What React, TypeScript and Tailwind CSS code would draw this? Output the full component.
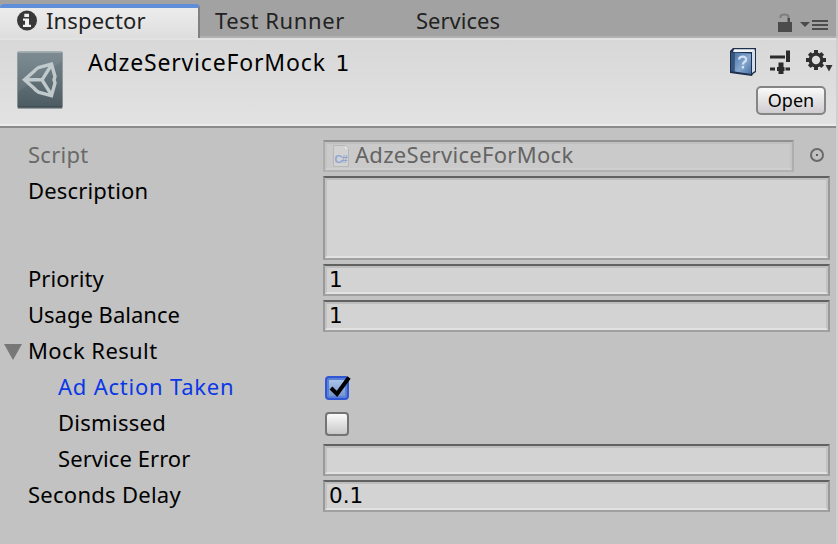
import React from 'react';

const sans = "font-['Noto_Sans','DejaVu_Sans',sans-serif]";
const digits = "font-['DejaVu_Sans',sans-serif]";

function Frame({ className = '', faded = false, children }: { className?: string; faded?: boolean; children?: React.ReactNode }) {
  return (
    <div className={`border-2 ${faded ? 'border-x-[#adadad] border-t-[#919191] border-b-[#b1b1b1]' : 'border-x-[#999999] border-t-[#616161] border-b-[#a0a0a0]'} ${className}`}>
      <div className={`flex h-full items-center border-2 ${faded ? 'border-x-[#c3c3c3] border-t-[#c0c0c0] border-b-[#d0d0d0] bg-[#cacaca]' : 'border-x-[#c3c3c3] border-t-[#bebebe] border-b-[#e2e2e2] bg-[#d3d3d3]'}`}>
        {children}
      </div>
    </div>
  );
}

function Row({ label, className = '', tall = false, children }: { label: string; className?: string; tall?: boolean; children?: React.ReactNode }) {
  return (
    <div className={`flex ${tall ? 'h-[84px]' : 'h-8'}`}>
      <div className={`h-7 w-[295px] shrink-0 whitespace-nowrap text-[22px] leading-7 ${className}`}>{label}</div>
      {children}
    </div>
  );
}

function Value({ children }: { children: string }) {
  return <span className={`${digits} pl-[2px] text-[21.5px] leading-7 text-black`}>{children}</span>;
}

function InfoIcon() {
  return (
    <svg className="block" width="22" height="22" viewBox="0 0 22 22">
      <circle cx="11" cy="10.500" r="10" fill="#393939" />
      <path d="M8.300 3.800H13V7H8.300zM7 8.500h6v6.200h2v2.300H7v-2.300h2v-4H7z" fill="#f2f2f2" />
    </svg>
  );
}

function AssetIcon() {
  return (
    <svg className="block" width="46" height="58" viewBox="0 0 46 58">
      <defs>
        <linearGradient id="asset" x1="0" y1="0" x2="0" y2="1">
          <stop offset="0" stopColor="#76858c" />
          <stop offset=".5" stopColor="#637279" />
          <stop offset="1" stopColor="#4c5a62" />
        </linearGradient>
      </defs>
      <rect x="0.500" y="1" width="45" height="57" rx="1" fill="#9a9fa1" />
      <rect x="0.500" y="0.500" width="45" height="56" rx="1" fill="url(#asset)" />
      <path d="M1 1h44v9L1 41z" fill="#fff" opacity=".06" />
      <path d="M1 1.500h44" stroke="#9aa8ad" />
      <path d="M1 56h44" stroke="#36454d" />
      <g fill="none" stroke="#c0c9cc" strokeWidth="3.400" strokeLinejoin="miter">
        <path d="M18.500 19 7.500 28.800l11 9.800M7 28.800h18M25 28.800l9.500-15M25 28.800l9.500 15M17.500 19.500l4-3 13-3.500 3.500 12.500-1 3.300 1 3.300-3.500 12.500-13-3.500-4-3" />
      </g>
    </svg>
  );
}

function LockIcon() {
  return (
    <svg className="block" width="16" height="20" viewBox="0 0 16 20">
      <path d="M4.500 5V3.500Q5 1.500 8.500 1.500T12.500 3.500V6" fill="none" stroke="#7d7d7d" strokeWidth="2" />
      <path d="M2 9h14v10H2z" fill="#4b4b4b" />
      <path d="M11.500 5h2.500v4h-2.500z" fill="#4b4b4b" />
    </svg>
  );
}

function MenuIcon() {
  return (
    <svg className="block" width="28" height="12" viewBox="0 0 28 12">
      <path d="M0 3h10L5 8z" fill="#4b4b4b" />
      <path d="M12 2h16M12 6h16M12 10h16" stroke="#4b4b4b" strokeWidth="2" />
    </svg>
  );
}

function BookIcon() {
  return (
    <svg className="block" width="28" height="30" viewBox="0 0 28 30">
      <defs>
        <linearGradient id="book" x1="0" y1="0" x2="1" y2="1">
          <stop offset="0" stopColor="#4f77a6" />
          <stop offset=".55" stopColor="#85a8d0" />
          <stop offset="1" stopColor="#4a70a2" />
        </linearGradient>
      </defs>
      <path d="M0 3 3 0h23v24l-3 2-1 2L0 25z" fill="#1d304e" />
      <path d="M4 1.200h20.500l.500 2.800H3z" fill="#f3f6f9" />
      <path d="M22 3h3v20l-3 2z" fill="#d5dde6" />
      <path d="M1 4 4 5v19l-3-1z" fill="#345780" />
      <path d="m4.500 4.500 16.500 1v20.500L4.500 23.500z" fill="url(#book)" />
      <path d="M9 11.500q.500-3 4-2.800 3.500.300 3 3.300-.300 1.500-2 2.300-1 .800-1 2.200M13 18v2.500" fill="none" stroke="#d5e2f2" strokeWidth="2.200" />
    </svg>
  );
}

function SlidersIcon() {
  return (
    <svg className="block" width="20" height="24" viewBox="0 0 20 24">
      <path d="M0 7h15M0 19h5M15.500 19H20" stroke="#2b2b2b" strokeWidth="3" />
      <path d="M16 .500h4v11.500h-4z" fill="#2b2b2b" />
      <path d="M8.500 12.500h5v11.500h-5z" fill="#2b2b2b" />
      <path d="M7 19h7.500" stroke="#2b2b2b" strokeWidth="4" />
    </svg>
  );
}

function GearIcon() {
  return (
    <svg className="block" width="28" height="24" viewBox="0 0 28 24">
      <g stroke="#2f2f2f" strokeWidth="4">
        <path d="M10 0v20M0 10h20M3.300 3.300l13.400 13.400M16.700 3.300 3.300 16.700" />
      </g>
      <circle cx="10" cy="10" r="7.500" fill="#2f2f2f" />
      <circle cx="10" cy="10" r="4.200" fill="#dcdcdc" />
      <path d="M19.500 15h7L23 21.500z" fill="#333" />
    </svg>
  );
}

function ScriptIcon() {
  return (
    <svg className="block" width="16" height="22" viewBox="0 0 16 22">
      <path d="M.500.500h12l3 3v18H.500z" fill="#d2d2d2" stroke="#b8b8b8" />
      <path d="M12 .500v3.500h3.500z" fill="#e2e2e2" />
      <text x="1.600" y="17.500" fontSize="11" textLength="13" fontFamily="Liberation Sans, sans-serif" fontWeight="bold" fill="#91a5d2">C#</text>
    </svg>
  );
}

export default function App() {
  return (
    <div className={`${sans} flex h-[544px] w-[838px] overflow-hidden bg-[#c2c2c2] text-black`}>
      <div className="flex w-[836px] flex-col">
        <div className="flex h-[38px] border-b-2 border-[#b0b0b0] bg-[#a2a2a2] pt-1 text-[22px] leading-[33px] text-[#222]">
          <div className="flex h-[34px] w-[200px] rounded-t border-t-4 border-r-2 border-t-[#5f8fd9] border-r-[#818181] bg-linear-to-b from-[#ececec] to-[#dedede] pl-4">
            <div className="pt-[2px]"><InfoIcon /></div>
            <div className="-mt-1 pl-[8px] tracking-[0.150px]">Inspector</div>
          </div>
          <div className="w-[200px] pl-[15px] tracking-[0.600px]">Test Runner</div>
          <div className="pl-[16px] tracking-[0px]">Services</div>
          <div className="ml-auto flex pt-[9px] pr-2">
            <LockIcon />
            <div className="pt-[6px] pl-[8px]"><MenuIcon /></div>
          </div>
        </div>

        <div className="flex h-[90px] border-t-2 border-b-2 border-t-[#e2e2e2] border-b-[#8b8b8b] bg-linear-to-b from-[#d8d8d8] to-[#e2e2e2] shadow-[inset_0_-2px_0_#ebebeb]">
          <div className="pt-[11px] pl-[17px]"><AssetIcon /></div>
          <div className="pt-[7px] pl-[25px] text-[23px] leading-[31px] tracking-[0.830px]">AdzeServiceForMock <span className={`${digits} pl-[3px] text-[22px]`}>1</span></div>
          <div className="ml-auto flex flex-col items-end">
            <div className="flex pt-2 pr-[2px]">
              <BookIcon />
              <div className="pt-[2px] pl-[12px]"><SlidersIcon /></div>
              <div className="pt-[2px] pl-[16px]"><GearIcon /></div>
            </div>
            <div className="mt-[8px] mr-[10px] flex h-[29px] w-[70px] items-center justify-center rounded-[5px] border-2 border-[#858585] bg-linear-to-b from-[#fafafa] to-[#cfcccf] pb-[2px] text-[18px] leading-6">Open</div>
          </div>
        </div>

        <div className="flex flex-col gap-1 pt-3 pl-7">
          <Row label="Script" className="tracking-[0.250px] text-[#696969]">
            <Frame faded className="w-[471px]">
              <div className="pl-[6px]"><ScriptIcon /></div>
              <span className="pb-[4px] pl-[6px] text-[22px] leading-6 tracking-[0.300px] text-[#646464]">AdzeServiceForMock</span>
            </Frame>
            <svg className="mt-2 ml-[16px] block" width="14" height="14" viewBox="0 0 14 14">
              <circle cx="7" cy="7" r="6" fill="none" stroke="#6a6a6a" strokeWidth="2" />
              <circle cx="7" cy="7" r="1.100" fill="#444" />
            </svg>
          </Row>
          <Row tall label="Description" className="tracking-[0.170px]"><Frame className="w-[507px]" /></Row>
          <Row label="Priority" className="tracking-[0.050px]"><Frame className="w-[507px]"><Value>1</Value></Frame></Row>
          <Row label="Usage Balance" className="tracking-[0px]"><Frame className="w-[507px]"><Value>1</Value></Frame></Row>
          <div className="-ml-6 flex">
            <svg className="mt-[8px] mr-[6px] block" width="18" height="16" viewBox="0 0 18 16"><path d="M0 0h18L9 16z" fill="#777" /></svg>
            <Row label="Mock Result" className="tracking-[0.400px]" />
          </div>
          <Row label="Ad Action Taken" className="pl-[30px] tracking-[0.780px] text-[#0a38e6]">
            <svg className="mt-[3px] ml-[2px] block" width="27" height="26" viewBox="0 0 27 26">
              <defs><linearGradient id="on" x1="0" y1="0" x2="0" y2="1"><stop offset="0" stopColor="#aac4e6" /><stop offset="1" stopColor="#7596cf" /></linearGradient></defs>
              <rect x="1" y="2" width="22" height="22" rx="3" fill="#597fd6" stroke="#3156d4" strokeWidth="2" />
              <rect x="4" y="5" width="16" height="16" fill="url(#on)" />
              <path d="m6 13 6 6L24 2.500" fill="none" stroke="#000" strokeWidth="4" />
            </svg>
          </Row>
          <Row label="Dismissed" className="pl-[30px] tracking-[0.280px]">
            <div className="mt-1 ml-[2px] h-6 w-6 rounded-[4px] border-2 border-[#747474] bg-linear-to-b from-[#fbfbfb] to-[#c9c7c9]" />
          </Row>
          <Row label="Service Error" className="pl-[30px] tracking-[0.070px]"><Frame className="w-[507px]" /></Row>
          <Row label="Seconds Delay" className="tracking-[0.270px]"><Frame className="w-[507px]"><Value>0.1</Value></Frame></Row>
        </div>
      </div>
      <div className="mt-[38px] w-[2px] bg-[#d0d0d0]" />
    </div>
  );
}
